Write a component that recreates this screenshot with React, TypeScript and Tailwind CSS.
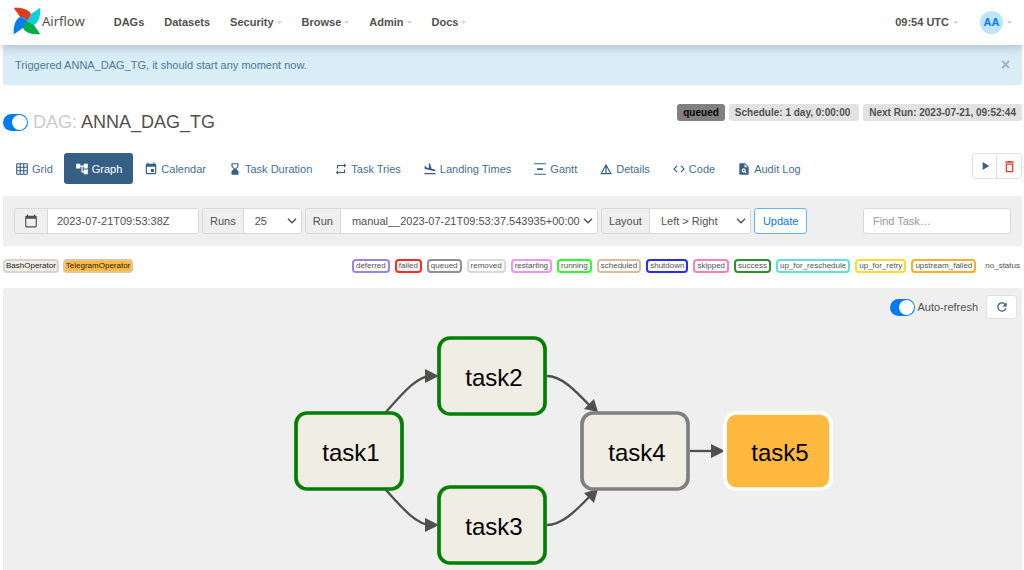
import React, { useState } from 'react';
import {
    MdAccountTree, MdCalendarToday, MdCode, MdDeleteOutline, MdDetails, MdEvent, MdFlightLand,
    MdGridOn, MdHourglassBottom, MdPlagiarism, MdPlayArrow, MdRefresh, MdRepeat, MdVerticalDistribute,
} from 'react-icons/md';
import type { IconType } from 'react-icons';

const MENU = [
    { label: 'DAGs', caret: false },
    { label: 'Datasets', caret: false },
    { label: 'Security', caret: true },
    { label: 'Browse', caret: true },
    { label: 'Admin', caret: true },
    { label: 'Docs', caret: true },
];

const TABS: { label: string; icon: IconType }[] = [
    { label: 'Grid', icon: MdGridOn },
    { label: 'Graph', icon: MdAccountTree },
    { label: 'Calendar', icon: MdEvent },
    { label: 'Task Duration', icon: MdHourglassBottom },
    { label: 'Task Tries', icon: MdRepeat },
    { label: 'Landing Times', icon: MdFlightLand },
    { label: 'Gantt', icon: MdVerticalDistribute },
    { label: 'Details', icon: MdDetails },
    { label: 'Code', icon: MdCode },
    { label: 'Audit Log', icon: MdPlagiarism },
];

const STATES = [
    { label: 'deferred', style: 'border-[#9f81e0] px-[2px]' },
    { label: 'failed', style: 'border-[#ff2a2a] px-[2px]' },
    { label: 'queued', style: 'border-[#909090] px-[2px]' },
    { label: 'removed', style: 'border-[#d8d8d8] px-[2px]' },
    { label: 'restarting', style: 'border-[#f092f0] px-[2px]' },
    { label: 'running', style: 'border-[#2aff2a] px-[2px]' },
    { label: 'scheduled', style: 'border-[#d8bd9a] px-[2px]' },
    { label: 'shutdown', style: 'border-[#2a2aff] px-[2px]' },
    { label: 'skipped', style: 'border-[#ff7cbd] px-[2px]' },
    { label: 'success', style: 'border-[#2a942a] px-[2px]' },
    { label: 'up_for_reschedule', style: 'border-[#5ae4d7] px-[2px]' },
    { label: 'up_for_retry', style: 'border-[#ffdc2a] px-[2px]' },
    { label: 'upstream_failed', style: 'border-[#ffae2a] px-[2px]' },
    { label: 'no_status', style: 'border-transparent pl-[2px]' },
];

const NODES = [
    { id: 'task1', x: 6, y: 81, fill: '#f0ede4', stroke: '#008000' },
    { id: 'task2', x: 149, y: 6, fill: '#f0ede4', stroke: '#008000' },
    { id: 'task3', x: 149, y: 155, fill: '#f0ede4', stroke: '#008000' },
    { id: 'task4', x: 292, y: 81, fill: '#f0ede4', stroke: '#808080' },
    { id: 'task5', x: 435, y: 81, fill: '#ffb93f', stroke: '#ffffff' },
];

// one blade per quarter turn: red, cyan, green, blue
const BLADES = [
    { angle: 0, fill: '#e43921', fold: '#ff7557' },
    { angle: 90, fill: '#0ccfdf', fold: '#11e1ee' },
    { angle: 180, fill: '#00ad46', fold: '#04d659' },
    { angle: 270, fill: '#017cee', fold: '#0cb6ff' },
];

const Caret = () => (
    <svg viewBox="0 0 6 3" className="h-[3px] w-[5px] text-[#cbcbcb]" fill="currentColor" aria-hidden="true">
        <path d="M0 0h6L3 3z" />
    </svg>
);

const Pinwheel = () => (
    <svg viewBox="0 0 28 28" className="size-7" aria-hidden="true">
        {BLADES.map(b => (
            <g key={b.angle} transform={`rotate(${b.angle} 14 14)`}>
                <path d="M.8 .8C7 .2 14.500 1.800 17.300 5.800C19.300 9 17.500 12.500 14 14C12.500 12.500 10 11.300 7.500 10.500C5.500 7.500 3 4.500 .8 .8z" fill={b.fill} />
                <path d="M14 14C17.500 12.800 19 9.500 17.500 6.200C17.500 9.500 16.200 12 14 14z" fill={b.fold} />
            </g>
        ))}
    </svg>
);

const Toggle = ({ id, checked, onChange, label }: { id: string; checked: boolean; onChange: () => void; label?: string }) => (
    <label htmlFor={id} className="flex cursor-pointer items-center gap-[2px]">
        <input id={id} type="checkbox" checked={checked} onChange={onChange} aria-label={label || 'Pause/Unpause DAG'} className="peer sr-only" />
        <span className="flex h-[17px] w-[25px] items-center rounded-full bg-[#cbcbcb] px-px peer-checked:justify-end peer-checked:bg-[#017cee]">
            <span className="size-[15px] rounded-full bg-white" />
        </span>
        {label}
    </label>
);

interface SelectGroupProps {
    id: string;
    label: string;
    options: string[];
    className: string;
}

const SelectGroup: React.FC<SelectGroupProps> = ({ id, label, options, className }) => (
    <div className="flex h-[26px] rounded-[3px] border border-[#d9d9d9]">
        <label htmlFor={id} className="flex items-center border-r border-[#d9d9d9] px-[7px]">{label}</label>
        <div className="relative">
            <select id={id} className={`h-full appearance-none rounded-r-[2px] bg-white pl-[11px] pr-3 ${className}`}>
                {options.map(o => <option key={o}>{o}</option>)}
            </select>
            <svg viewBox="0 0 10 6" className="pointer-events-none absolute right-1 top-1/2 h-[6px] w-[10px] -translate-y-1/2" fill="none" stroke="#51504f" strokeWidth="1.400" aria-hidden="true">
                <path d="M1 .8L5 4.800L9 .8" />
            </svg>
        </div>
    </div>
);

const Graph = () => (
    <svg viewBox="0 0 546 238" className="h-[238px] w-[546px]" role="img" aria-label="DAG graph">
        <g fill="none" stroke="#51504f" strokeWidth="2.300">
            <path d="M96 80C113 61 127 44 141 44" />
            <path d="M96 158C113 177 127 193 141 193" />
            <path d="M257 44C271 44 284 57 301 75" />
            <path d="M257 193C271 193 284 181 301 163" />
            <path d="M400 119H428" />
        </g>
        <g fill="#51504f">
            <path d="M135 37L149 44L135 51z" />
            <path d="M135 186L149 193L135 200z" />
            <path d="M308 80L294 77L304 67z" />
            <path d="M308 157L304 171L294 161z" />
            <path d="M421 112L435 119L421 126z" />
        </g>
        {NODES.map(n => (
            <g key={n.id}>
                <rect x={n.x} y={n.y} width="106" height="76" rx="11" fill={n.fill} stroke={n.stroke} strokeWidth="3.700" />
                <text x={n.x + 55} y={n.y + 48} textAnchor="middle" fontSize="24" fill="#000">{n.id}</text>
            </g>
        ))}
    </svg>
);

export default function App() {
    const [active, setActive] = useState('Graph');
    const [enabled, setEnabled] = useState(true);
    const [refresh, setRefresh] = useState(true);
    const [showAlert, setShowAlert] = useState(true);

    return (
        <div className="flex min-h-screen flex-col bg-white font-['Liberation_Sans',Arial,sans-serif] text-[11px] leading-4 text-[#51504f]">
            <header className="relative z-10 flex h-[45px] items-center bg-white pb-px pl-[13px] pr-3 font-bold shadow-[0_2px_10px_rgba(0,0,0,0.22)]">
                <a href="#home" className="flex items-center gap-px pb-[3px] font-['Noto_Sans',sans-serif] text-[13px] font-normal">
                    <Pinwheel />
                    Airflow
                </a>
                <nav className="ml-[29px] flex items-center gap-5">
                    {MENU.map(m => (
                        <a key={m.label} href={`#${m.label}`} className="flex items-center gap-[3px]">
                            {m.label}
                            {m.caret && <Caret />}
                        </a>
                    ))}
                </nav>
                <div className="ml-auto flex items-center gap-[22px]">
                    <button className="flex items-center gap-1">09:54 UTC <Caret /></button>
                    <button className="flex items-center gap-1">
                        <span className="flex size-[23px] items-center justify-center rounded-full bg-[#bee4fb] text-[#017cee]">AA</span>
                        <Caret />
                    </button>
                </div>
            </header>

            <main className="flex flex-1 flex-col pl-[3px] pr-[2px]">
                {showAlert && (
                    <div className="flex h-10 items-center justify-between rounded-b-[3px] bg-[#d9edf7] px-3 text-[#4b7898]">
                        Triggered ANNA_DAG_TG, it should start any moment now.
                        <button onClick={() => setShowAlert(false)} aria-label="Close" className="text-base font-bold text-[#94b5ca]">×</button>
                    </div>
                )}

                <div className="flex justify-between pt-[19px]">
                    <div className="flex items-center gap-[5px] pt-[7px] text-[18px] leading-[22px]">
                        <Toggle id="pause" checked={enabled} onChange={() => setEnabled(!enabled)} />
                        <h1><span className="text-[#cbcbcb]">DAG:</span> ANNA_DAG_TG</h1>
                    </div>
                    <div className="flex h-[17px] gap-1 text-[10px] font-bold leading-[17px]">
                        <span className="rounded-[3px] bg-[#808080] px-[6px] text-black">queued</span>
                        <a href="#schedule" className="rounded-[3px] bg-[#e2e2e2] pl-[6px] pr-[9px]">Schedule: 1 day, 0:00:00</a>
                        <span className="rounded-[3px] bg-[#e2e2e2] px-[6px]">Next Run: 2023-07-21, 09:52:44</span>
                    </div>
                </div>

                <div className="mt-5 flex items-start justify-between pb-3">
                    <nav className="flex pl-px">
                        {TABS.map(({ label, icon: Icon }) => (
                            <a
                                key={label}
                                href={`#${label}`}
                                onClick={() => setActive(label)}
                                className={`flex h-[31px] items-center gap-[3px] rounded-[3px] px-[11px] ${active === label ? 'bg-[#355f85] text-white' : 'text-[#456f92]'}`}
                            >
                                <Icon className={`size-[14px] ${active === label ? 'text-white' : 'text-[#355f85]'}`} />
                                {label}
                            </a>
                        ))}
                    </nav>
                    <div className="flex h-[26px] rounded-[3px] border border-[#e2e2e2]">
                        <button aria-label="Trigger DAG" className="flex w-6 items-center justify-center border-r border-[#e2e2e2] text-[#355f85]"><MdPlayArrow size={14} /></button>
                        <button aria-label="Delete DAG" className="flex w-6 items-center justify-center text-[#e43921]"><MdDeleteOutline size={15} /></button>
                    </div>
                </div>

                <form className="flex h-[50px] items-center gap-[3px] bg-[#efefef] px-[11px]" onSubmit={e => e.preventDefault()}>
                    <div className="flex h-[26px] rounded-[3px] border border-[#d9d9d9]">
                        <label htmlFor="base_date" className="flex w-[33px] items-center justify-center border-r border-[#d9d9d9]" aria-label="Base date">
                            <MdCalendarToday size={14} />
                        </label>
                        <input id="base_date" defaultValue="2023-07-21T09:53:38Z" className="w-[150px] rounded-r-[2px] bg-white px-[9px]" />
                    </div>
                    <SelectGroup id="num_runs" label="Runs" options={['25', '5', '50', '100', '365']} className="w-[57px]" />
                    <SelectGroup id="run_id" label="Run" options={['manual__2023-07-21T09:53:37.543935+00:00']} className="w-[256px]" />
                    <SelectGroup id="arrange" label="Layout" options={['Left > Right', 'Right > Left', 'Top > Bottom', 'Bottom > Top']} className="w-[100px]" />
                    <button type="submit" className="h-[26px] rounded-[3px] border border-[#68b0f4] bg-white px-2 text-[#017cee]">Update</button>
                    <input aria-label="Find Task" placeholder="Find Task…" className="ml-auto h-[26px] w-[148px] rounded-[3px] border border-[#d9d9d9] bg-white px-[9px] placeholder:text-[#999]" />
                </form>

                <div className="flex items-center justify-between pb-[15px] pt-[13px] text-[8px] leading-[10px]">
                    <div className="flex gap-1 text-[#222]">
                        <span className="rounded-[4px] border-2 border-[#d3d3d3] bg-[#f0ede4] px-px">BashOperator</span>
                        <span className="rounded-[4px] border-2 border-[#d9c8a4] bg-[#ffb93f] px-px">TelegramOperator</span>
                    </div>
                    <div className="flex gap-[5px]">
                        {STATES.map(s => (
                            <span key={s.label} className={`rounded-[4px] border-2 ${s.style}`}>{s.label}</span>
                        ))}
                    </div>
                </div>

                <section className="flex flex-1 flex-col rounded-t-[3px] bg-[#efefef]">
                    <div className="flex items-center justify-end gap-2 pr-[5px] pt-[7px]">
                        <Toggle id="auto_refresh" checked={refresh} onChange={() => setRefresh(!refresh)} label="Auto-refresh" />
                        <button aria-label="Refresh" className="flex h-6 w-[31px] items-center justify-center rounded-[3px] border border-[#e2e2e2] bg-white text-[#355f85]">
                            <MdRefresh size={14} />
                        </button>
                    </div>
                    <div className="mt-[13px] flex justify-center pl-[101px]">
                        <Graph />
                    </div>
                </section>
            </main>
        </div>
    );
}
